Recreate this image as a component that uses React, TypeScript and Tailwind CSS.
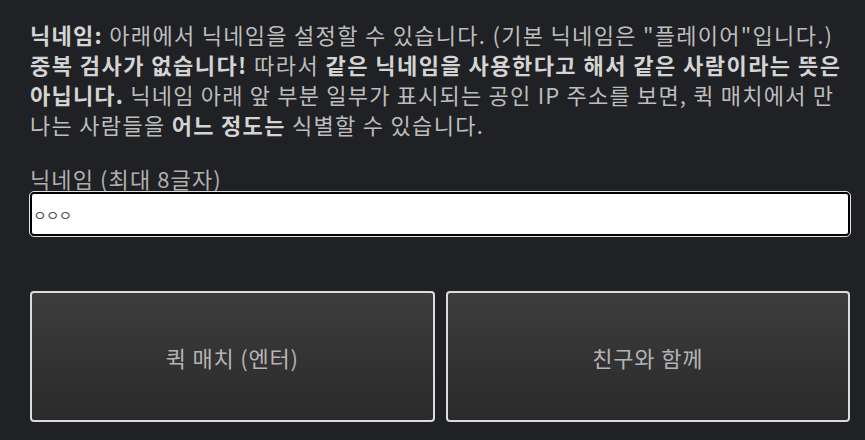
import React from 'react';

const Btn: React.FC<{ children: React.ReactNode }> = ({ children }) => (
  <button className="flex-1 h-[131px] rounded-[4px] border-2 border-[#dcdcdc] bg-gradient-to-b from-[#3d3d3d] to-[#2a2a2a] text-[22px] tracking-[0.8px] text-[#b4b4b4]">
    {children}
  </button>
);

const B: React.FC<{ children: React.ReactNode }> = ({ children }) => (
  <b className="text-[#d4d4d4]">{children}</b>
);

export default function App() {
  return (
    <div className="min-h-[440px] w-[865px] bg-[#202124] pl-[30px] pr-[16px] pt-[19px] text-[22px] leading-[30px] tracking-[1.1px] text-[#bdbdbd] [font-family:'Noto_Sans_CJK_KR','Noto_Sans',sans-serif]">
      <p className="tracking-[1.3px]">
        <span className="block whitespace-nowrap">
          <B>닉네임:</B> 아래에서 닉네임을 설정할 수 있습니다. (기본 닉네임은 "플레이어"입니다.)
        </span>
        <span className="block whitespace-nowrap tracking-[1.45px]">
          <B>중복 검사가 없습니다!</B> 따라서 <B>같은 닉네임을 사용한다고 해서 같은 사람이라는 뜻은</B>
        </span>
        <span className="block whitespace-nowrap tracking-[1.2px]">
          <B>아닙니다.</B> 닉네임 아래 앞 부분 일부가 표시되는 공인 IP 주소를 보면, 퀵 매치에서 만
        </span>
        <span className="block whitespace-nowrap">
          나는 사람들을 <B>어느 정도는</B> 식별할 수 있습니다.
        </span>
      </p>
      <label className="mt-[24px] block text-[#b0b0b0]">닉네임 (최대 8글자)</label>
      <input
        defaultValue="ㅇㅇㅇ"
        className="mt-[-1px] block h-[44px] w-[820px] rounded-[4px] border-2 border-black bg-white px-[1px] text-[15px] tracking-[-1px] text-[#555] outline outline-1 outline-[#e0e0e0]"
      />
      <div className="mt-[55px] flex w-[820px] gap-[11px]">
        <Btn>퀵 매치 (엔터)</Btn>
        <Btn>친구와 함께</Btn>
      </div>
    </div>
  );
}
